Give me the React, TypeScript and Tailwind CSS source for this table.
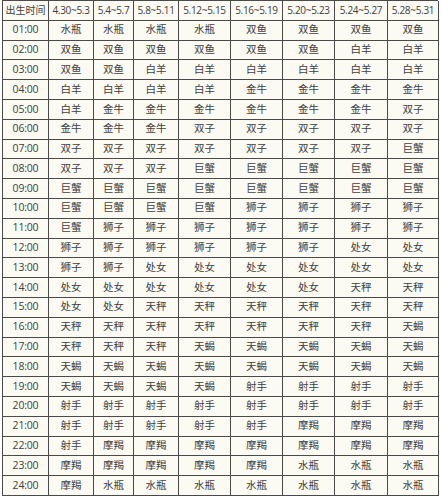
import { Fragment } from "react"

const headers = ["出生时间", "4.30~5.3", "5.4~5.7", "5.8~5.11", "5.12~5.15", "5.16~5.19", "5.20~5.23", "5.24~5.27", "5.28~5.31"]

const rows: [string, string[]][] = [
  ["01:00", ["水瓶", "水瓶", "水瓶", "水瓶", "双鱼", "双鱼", "双鱼", "双鱼"]],
  ["02:00", ["双鱼", "双鱼", "双鱼", "双鱼", "双鱼", "双鱼", "白羊", "白羊"]],
  ["03:00", ["双鱼", "双鱼", "白羊", "白羊", "白羊", "白羊", "白羊", "白羊"]],
  ["04:00", ["白羊", "白羊", "白羊", "白羊", "金牛", "金牛", "金牛", "金牛"]],
  ["05:00", ["白羊", "金牛", "金牛", "金牛", "金牛", "金牛", "金牛", "双子"]],
  ["06:00", ["金牛", "金牛", "金牛", "双子", "双子", "双子", "双子", "双子"]],
  ["07:00", ["双子", "双子", "双子", "双子", "双子", "双子", "双子", "巨蟹"]],
  ["08:00", ["双子", "双子", "双子", "巨蟹", "巨蟹", "巨蟹", "巨蟹", "巨蟹"]],
  ["09:00", ["巨蟹", "巨蟹", "巨蟹", "巨蟹", "巨蟹", "巨蟹", "巨蟹", "巨蟹"]],
  ["10:00", ["巨蟹", "巨蟹", "巨蟹", "巨蟹", "狮子", "狮子", "狮子", "狮子"]],
  ["11:00", ["巨蟹", "狮子", "狮子", "狮子", "狮子", "狮子", "狮子", "狮子"]],
  ["12:00", ["狮子", "狮子", "狮子", "狮子", "狮子", "狮子", "处女", "处女"]],
  ["13:00", ["狮子", "狮子", "处女", "处女", "处女", "处女", "处女", "处女"]],
  ["14:00", ["处女", "处女", "处女", "处女", "处女", "处女", "天秤", "天秤"]],
  ["15:00", ["处女", "处女", "天秤", "天秤", "天秤", "天秤", "天秤", "天秤"]],
  ["16:00", ["天秤", "天秤", "天秤", "天秤", "天秤", "天秤", "天秤", "天蝎"]],
  ["17:00", ["天秤", "天秤", "天秤", "天蝎", "天蝎", "天蝎", "天蝎", "天蝎"]],
  ["18:00", ["天蝎", "天蝎", "天蝎", "天蝎", "天蝎", "天蝎", "天蝎", "天蝎"]],
  ["19:00", ["天蝎", "天蝎", "天蝎", "天蝎", "射手", "射手", "射手", "射手"]],
  ["20:00", ["射手", "射手", "射手", "射手", "射手", "射手", "射手", "射手"]],
  ["21:00", ["射手", "射手", "射手", "射手", "射手", "摩羯", "摩羯", "摩羯"]],
  ["22:00", ["射手", "摩羯", "摩羯", "摩羯", "摩羯", "摩羯", "摩羯", "摩羯"]],
  ["23:00", ["摩羯", "摩羯", "摩羯", "摩羯", "摩羯", "水瓶", "水瓶", "水瓶"]],
  ["24:00", ["摩羯", "水瓶", "水瓶", "水瓶", "水瓶", "水瓶", "水瓶", "水瓶"]],
]

const cell = "flex items-center justify-center border-r border-b border-[#4a4a4a] whitespace-nowrap"

export default function App() {
  return (
    <main className="min-h-screen w-[442px] bg-white pl-[2px] font-['Open_Sans','Noto_Sans_CJK_SC',sans-serif] text-[#404040]">
      <div className="grid w-[436px] grid-cols-[46px_45px_40px_45px_52px_52px_52px_53px_51px] auto-rows-[19.8px] border-l border-t border-[#4a4a4a] bg-[#fbfaf3]">
        {headers.map((h, i) => (
          <div key={h} className={`${cell} ${i === 0 ? "text-[10px]" : "text-[10px] tracking-[-0.3px]"}`}>
            {h}
          </div>
        ))}

        {rows.map(([time, signs]) => (
          <Fragment key={time}>
            <div className={`${cell} text-[10.5px] tracking-[-0.2px]`}>{time}</div>
            {signs.map((s, j) => (
              <div key={j} className={`${cell} text-[10.5px]`}>
                {s}
              </div>
            ))}
          </Fragment>
        ))}
      </div>
    </main>
  )
}
